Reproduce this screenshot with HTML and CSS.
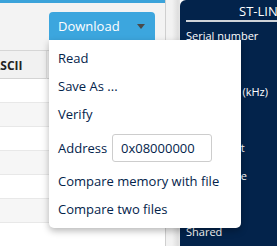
FILE: index.html
```html
<!DOCTYPE html>
<html>
<head>
<meta charset="utf-8">
<link rel="stylesheet" href="styles.css">
</head>
<body>
<div class="app">
  <div class="left">
    <div class="strip"></div>
    <div class="toolbar">
      <div class="dropdown">
        <button class="dl-btn"><span>Download</span><span class="caret"></span></button>
        <div class="menu">
          <div class="item">Read</div>
          <div class="item">Save As ...</div>
          <div class="item">Verify</div>
          <div class="item item-addr"><span class="addr-label">Address</span><span class="addr-input">0x08000000</span></div>
          <div class="item">Compare memory with file</div>
          <div class="item">Compare two files</div>
        </div>
      </div>
    </div>
    <div class="table">
      <div class="thead"><span class="th">ASCII</span></div>
      <div class="row"></div>
      <div class="row alt"></div>
      <div class="row"></div>
      <div class="row alt"></div>
      <div class="row"></div>
      <div class="row alt"></div>
      <div class="row"></div>
    </div>
  </div>
  <div class="gutter"></div>
  <div class="panel">
    <div class="title">ST-LINK configuration</div>
    <div class="field">Serial number</div>
    <div class="field">Port</div>
    <div class="field">Frequency (kHz)</div>
    <div class="field">Mode</div>
    <div class="field">Access port</div>
    <div class="field">Reset mode</div>
    <div class="field">Speed</div>
    <div class="field">Shared</div>
  </div>
</div>
</body>
</html>
```
FILE: styles.css
```css
html, body {
  margin: 0;
  padding: 0;
}
body {
  width: 277px;
  height: 246px;
  overflow: hidden;
  font-family: "Open Sans", "Noto Sans", sans-serif;
  background: #ffffff;
}
.app {
  display: flex;
  width: 277px;
  height: 246px;
}
.left {
  flex: 0 0 165px;
  display: flex;
  flex-direction: column;
  border-right: 1px solid #cfcfcf;
}
.strip {
  height: 3px;
  background: #3ba3da;
}
.toolbar {
  height: 38px;
  padding: 9px 0 0 49px;
  background: #f3f3f3;
  border-bottom: 1px solid #d6d6d6;
}
.dropdown {
  position: relative;
  width: 106px;
  z-index: 5;
}
.dl-btn {
  display: flex;
  align-items: center;
  width: 106px;
  height: 28px;
  padding: 0 0 0 9px;
  border: none;
  border-radius: 4px 4px 0 0;
  background: #3ca6de;
  color: #ffffff;
  font-family: "Open Sans", "Noto Sans", sans-serif;
  font-size: 13px;
}
.caret {
  margin-left: auto;
  margin-right: 10px;
  width: 0;
  height: 0;
  border-top: 5px solid #4a4a4a;
  border-left: 4px solid transparent;
  border-right: 4px solid transparent;
}
.menu {
  position: absolute;
  top: 28px;
  left: 0;
  width: 192px;
  padding: 4px 0 5px;
  background: #ffffff;
  border-radius: 0 0 5px 5px;
  box-shadow: 0 3px 7px rgba(0, 0, 0, 0.28);
  color: #03234b;
  font-size: 13px;
}
.item {
  height: 28px;
  line-height: 28px;
  padding-left: 9px;
  white-space: nowrap;
}
.item-addr {
  display: flex;
  align-items: center;
  height: 39px;
  padding-top: 1px;
  box-sizing: border-box;
}
.addr-label {
  width: 54px;
}
.addr-input {
  box-sizing: border-box;
  width: 100px;
  height: 28px;
  line-height: 26px;
  padding-left: 8px;
  border: 1px solid #cdcdcd;
  border-radius: 3px;
  color: #03234b;
}
.table {
  flex: 1;
  overflow: hidden;
}
.thead {
  height: 27px;
  line-height: 27px;
  background: #f1f1f1;
  border-bottom: 1px solid #d4d4d4;
  font-size: 12px;
  font-weight: 700;
  color: #222;
}
.th {
  display: inline-block;
  text-indent: -8px;
  padding-top: 1px;
  width: 46px;
  border-right: 1px solid #dedede;
}
.row {
  height: 23px;
  border-bottom: 1px solid #e8e8e8;
  background: #ffffff;
}
.row.alt {
  background: #f6f6f6;
}
.gutter {
  flex: 0 0 14px;
  background: linear-gradient(to right, #f2f2f2 0, #f2f2f2 6px, #dedede 12px, #e6e6e6 14px);
}
.panel {
  flex: 1;
  background: #03234b;
  border-top-left-radius: 6px;
  color: #ffffff;
  overflow: hidden;
  white-space: nowrap;
}
.title {
  margin-left: 6px;
  padding: 2px 0 0 53px;
  height: 18px;
  line-height: 18px;
  border-bottom: 2px solid #cfd3d8;
  font-size: 13px;
}
.field {
  height: 28px;
  line-height: 28px;
  padding-left: 6px;
  font-size: 11px;
}
```
